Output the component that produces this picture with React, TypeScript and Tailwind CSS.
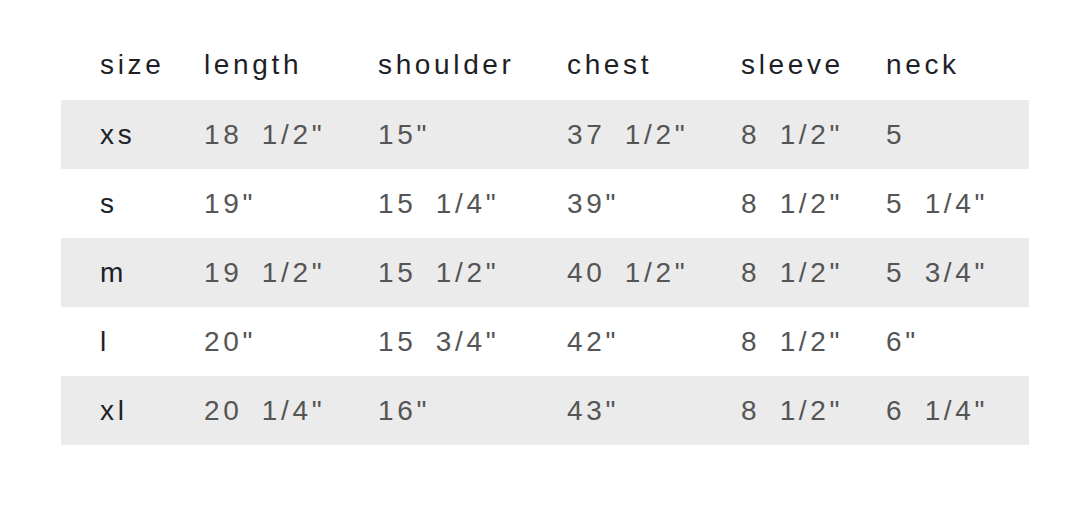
export default function App() {
  const headers = ["size", "length", "shoulder", "chest", "sleeve", "neck"];
  const rows = [
    ["xs", '18 1/2"', '15"', '37 1/2"', '8 1/2"', "5"],
    ["s", '19"', '15 1/4"', '39"', '8 1/2"', '5 1/4"'],
    ["m", '19 1/2"', '15 1/2"', '40 1/2"', '8 1/2"', '5 3/4"'],
    ["l", '20"', '15 3/4"', '42"', '8 1/2"', '6"'],
    ["xl", '20 1/4"', '16"', '43"', '8 1/2"', '6 1/4"'],
  ];
  const cols = "grid grid-cols-[104px_174px_189px_174px_145px_1fr]";
  return (
    <div
      className="w-[1090px] h-[516px] bg-white pt-[31px] pl-[61px]"
      style={{ fontFamily: '"Liberation Sans", Arial, sans-serif' }}
    >
      <div className="w-[968px]">
        <div className={`${cols} h-[69px] items-center pl-[39px] text-[28px] tracking-[0.13em] text-[#1d1f27]`}>
          {headers.map((h) => (
            <div key={h} className="pb-[2px]">{h}</div>
          ))}
        </div>
        {rows.map((r, i) => (
          <div
            key={r[0]}
            className={`${cols} h-[69px] items-center pl-[39px] text-[28px] tracking-[0.13em] ${i % 2 === 0 ? "bg-[#ebebeb]" : "bg-white"}`}
          >
            {r.map((c, j) => (
              <div
                key={j}
                className={j === 0 ? "text-[#1d1f27]" : "text-[#555555] [word-spacing:8px]"}
              >
                {c}
              </div>
            ))}
          </div>
        ))}
      </div>
    </div>
  );
}
